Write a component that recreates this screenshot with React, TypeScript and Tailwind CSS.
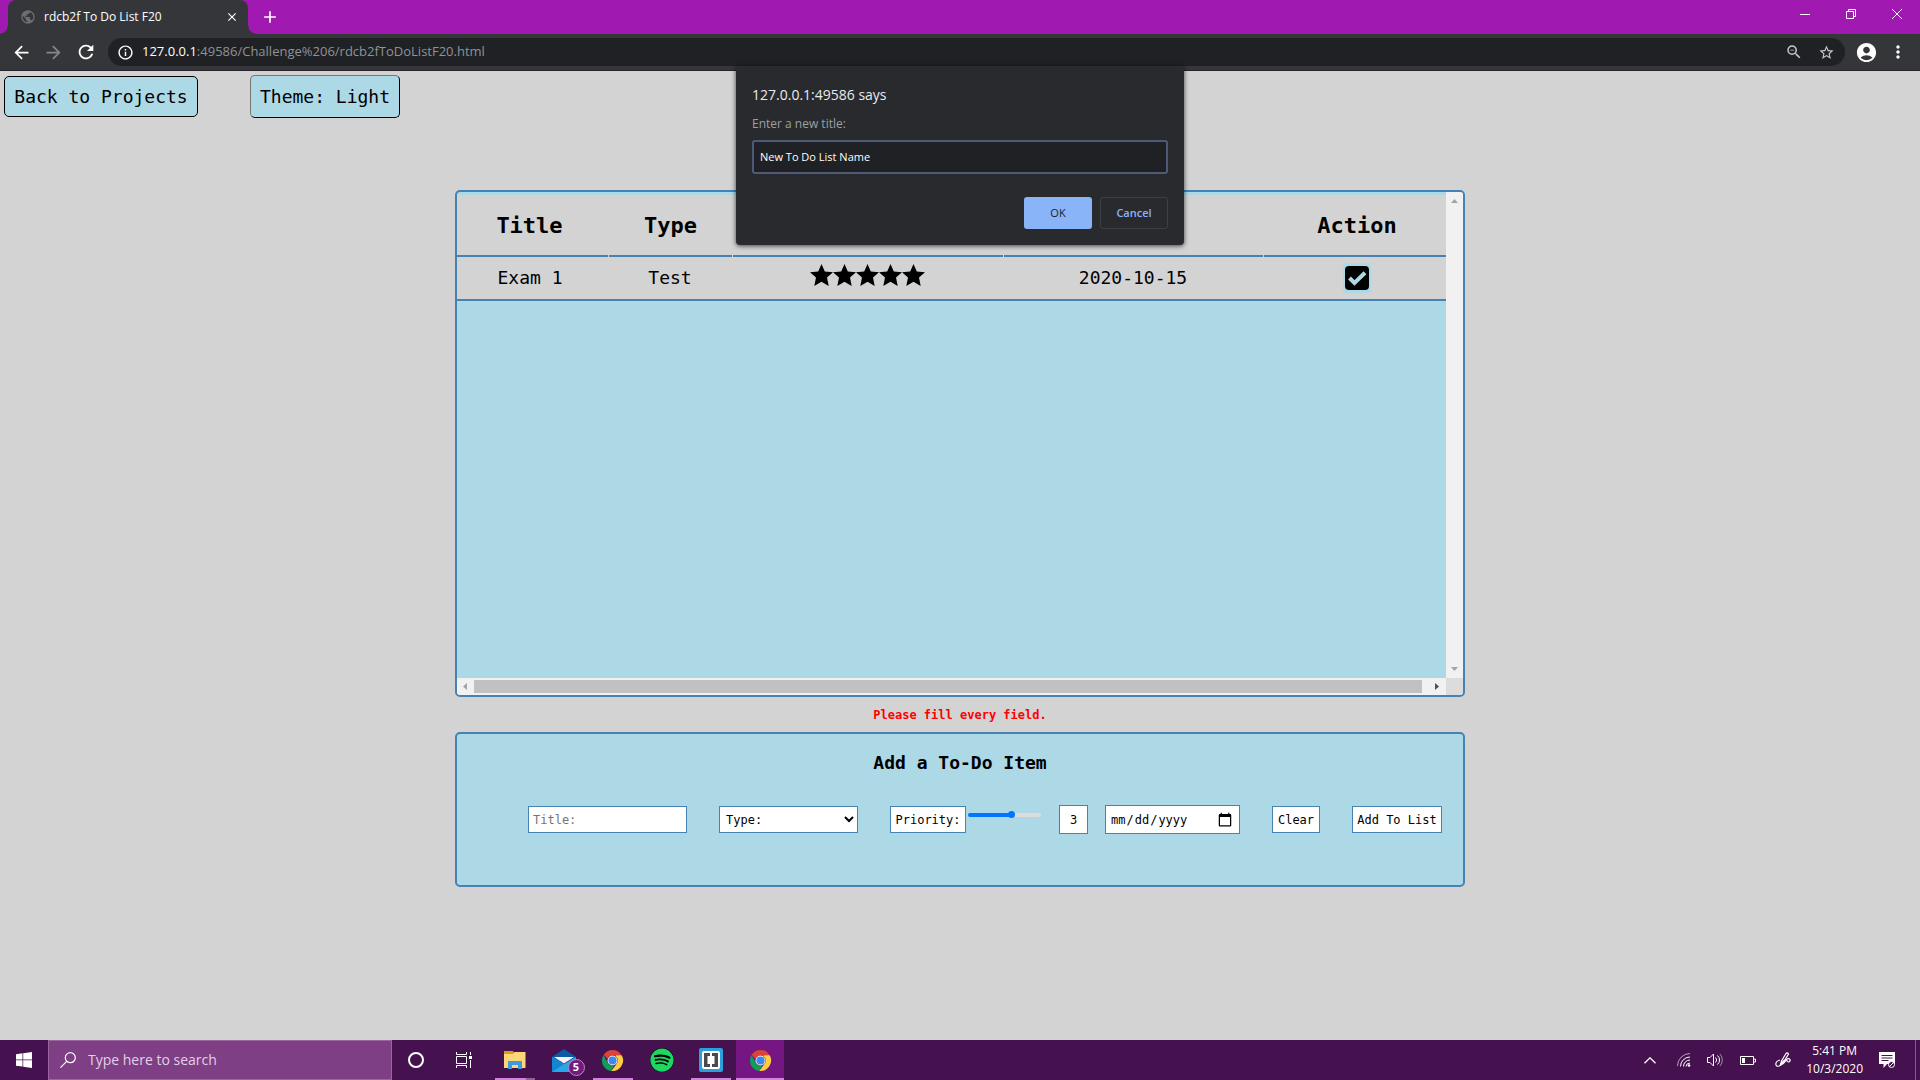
import React, { useState } from "react";
import {
  MdAccountCircle,
  MdAdd,
  MdArrowBack,
  MdArrowForward,
  MdClose,
  MdInfoOutline,
  MdMoreVert,
  MdPublic,
  MdRefresh,
  MdStarBorder,
  MdZoomOut,
} from "react-icons/md";
import { FaSpotify } from "react-icons/fa";

function TabStrip() {
  return (
    <header className="flex h-[34px] items-stretch bg-[#a01ab2]">
      <div className="flex w-2 items-end">
        <span className="h-2 w-2 bg-[radial-gradient(circle_at_0_0,transparent_7px,#35363a_8px)]" />
      </div>
      <div className="flex w-60 items-center rounded-t-lg bg-[#35363a] pr-[9px] pl-3 text-white">
        <MdPublic className="mr-2 size-4 shrink-0 text-[#6b6e73]" />
        <span className="flex-1 truncate text-xs">rdcb2f To Do List F20</span>
        <button aria-label="Close tab" className="flex">
          <MdClose className="size-3.5" />
        </button>
      </div>
      <div className="flex w-2 items-end">
        <span className="h-2 w-2 bg-[radial-gradient(circle_at_100%_0,transparent_7px,#35363a_8px)]" />
      </div>
      <button aria-label="New tab" className="ml-1 flex items-center text-white">
        <MdAdd className="size-5" />
      </button>
      <div className="ml-auto flex text-white">
        <button aria-label="Minimize" className="flex h-7 w-[46px] items-center justify-center">
          <svg viewBox="0 0 10 10" className="size-2.5">
            <path d="M0 5.5h10" stroke="currentColor" />
          </svg>
        </button>
        <button aria-label="Restore" className="flex h-7 w-[46px] items-center justify-center">
          <svg viewBox="0 0 10 10" className="size-2.5" fill="none" stroke="currentColor">
            <path d="M.5 2.5h7v7h-7zM2.5 2.5v-2h7v7h-2" />
          </svg>
        </button>
        <button aria-label="Close" className="flex h-7 w-[46px] items-center justify-center">
          <svg viewBox="0 0 10 10" className="size-2.5" stroke="currentColor">
            <path d="M0 0l10 10M10 0L0 10" />
          </svg>
        </button>
      </div>
    </header>
  );
}

function Toolbar() {
  return (
    <div className="flex h-[37px] items-center border-b border-[#27222a] bg-[#35363a] pl-[11px] text-white">
      <button aria-label="Back" className="flex w-8">
        <MdArrowBack className="size-[21px]" />
      </button>
      <button aria-label="Forward" className="flex w-8 text-[#85868a]">
        <MdArrowForward className="size-[21px]" />
      </button>
      <button aria-label="Reload" className="flex w-[33px]">
        <MdRefresh className="size-[22px]" />
      </button>
      <div className="flex h-7 flex-1 items-center rounded-full bg-[#202124] pr-2.5 pl-[9px]">
        <MdInfoOutline className="mr-2 size-[17px]" />
        <span className="flex-1 text-[13px] text-[#8f9296]">
          <span className="text-white">127.0.0.1</span>:49586/Challenge%206/rdcb2fToDoListF20.html
        </span>
        <button aria-label="Zoom out" className="mr-[15px] flex text-[#c4c7cb]">
          <MdZoomOut className="size-[18px]" />
        </button>
        <button aria-label="Bookmark" className="flex text-[#c4c7cb]">
          <MdStarBorder className="size-[17px]" />
        </button>
      </div>
      <button aria-label="Profile" className="ml-2.5 flex">
        <MdAccountCircle className="size-[23px]" />
      </button>
      <button aria-label="Menu" className="mr-3 ml-2.5 flex">
        <MdMoreVert className="size-5" />
      </button>
    </div>
  );
}

function PromptDialog() {
  const [value, setValue] = useState("New To Do List Name");
  return (
    <div
      role="dialog"
      aria-labelledby="prompt-heading"
      className="absolute top-[66px] left-1/2 z-10 w-md -translate-x-1/2 rounded-b-sm bg-[#292a2d] px-4 pt-[17px] pb-4 shadow-[0_1px_5px_rgba(0,0,0,0.7)]"
    >
      <h1 id="prompt-heading" className="text-sm/6 text-[#e8eaed]">
        127.0.0.1:49586 says
      </h1>
      <label htmlFor="prompt-value" className="mt-[7px] block text-xs/5 text-[#9aa0a6]">
        Enter a new title:
      </label>
      <input
        id="prompt-value"
        value={value}
        onChange={(e) => setValue(e.target.value)}
        className="mt-1.5 block h-[34px] w-full rounded-[3px] border-2 border-[#4d5b79] bg-[#202124] px-1.5 pb-0.5 text-[11px] text-white outline-none"
      />
      <div className="mt-[23px] flex justify-end gap-2 text-[11px]">
        <button className="h-8 w-[68px] rounded-[3px] bg-[#8ab4f8] text-[#202124]">OK</button>
        <button className="h-8 w-[68px] rounded-[3px] border border-[#3c4043] font-semibold text-[#8ab4f8]">
          Cancel
        </button>
      </div>
    </div>
  );
}

function ScrollArrow({ className, d }: { className: string; d: string }) {
  return (
    <svg viewBox="0 0 17 17" className={"size-[17px] shrink-0 " + className} fill="currentColor">
      <path d={d} />
    </svg>
  );
}

const columns = [
  { id: "title", label: "Title", width: "w-[152px]", pad: "pr-1.5" },
  { id: "type", label: "Type", width: "w-[124px]", pad: "" },
  { id: "priority", label: "", width: "w-[271px]", pad: "" },
  { id: "due", label: "", width: "w-[260px]", pad: "" },
  { id: "action", label: "Action", width: "", pad: "pl-1" },
];

function TodoTable() {
  return (
    <section className="grid h-[507px] grid-cols-[1fr_17px] grid-rows-[1fr_17px] overflow-hidden rounded-[5px] border-2 border-[#4682b4] bg-[#add8e6]">
      <div className="pt-[3px]">
        <table className="w-full table-fixed border-collapse bg-[#d3d3d3] text-center text-lg">
          <thead>
            <tr>
              {columns.map((c, i) => (
                <th key={c.id} scope="col" className={"p-0 text-[22px] " + c.width}>
                  <div
                    className={
                      "flex h-[62px] items-center justify-center border-b-2 border-[#4682b4] pt-0.5 " +
                      c.pad +
                      (i < columns.length - 1 ? " mr-px" : "")
                    }
                  >
                    {c.label}
                  </div>
                </th>
              ))}
            </tr>
          </thead>
          <tbody>
            <tr className="h-[43px] border-b-2 border-[#4682b4]">
              <td className="p-0 pr-1.5">Exam 1</td>
              <td className="p-0 pr-0.5">Test</td>
              <td className="p-0 pr-0.5">
                <span className="flex justify-center pb-1.5" aria-label="5 stars">
                  {[1, 2, 3, 4, 5].map((n) => (
                    <svg key={n} viewBox="0 0 23 22" className="h-[22px] w-[23px]">
                      <path d="M11.500 0L14.800 7.400L23 8.200L17 13.600L18.700 22L11.500 17.800L4.300 22L6 13.600L0 8.200L8.200 7.400z" />
                    </svg>
                  ))}
                </span>
              </td>
              <td className="p-0 pr-0.5">2020-10-15</td>
              <td className="p-0 pl-1">
                <button
                  aria-label="Mark done"
                  className="inline-flex h-[30px] w-7 items-center justify-center rounded-sm bg-[#add8e6] align-middle"
                >
                  <svg viewBox="0 0 24 24" className="size-6">
                    <rect width="24" height="24" rx="4" />
                    <path d="M4.500 12l5 5L20 6.800" fill="none" stroke="#add8e6" strokeWidth="4" />
                  </svg>
                </button>
              </td>
            </tr>
          </tbody>
        </table>
      </div>
      <div className="flex flex-col justify-between bg-[#f1f1f1] text-[#a3a3a3]">
        <ScrollArrow className="" d="M5 11h7L8.500 7z" />
        <ScrollArrow className="" d="M5 6h7L8.500 10z" />
      </div>
      <div className="flex items-center bg-[#f1f1f1] text-[#a3a3a3]">
        <ScrollArrow className="" d="M10 5v7L6 8.500z" />
        <div className="mr-[7px] h-[13px] flex-1 bg-[#c1c1c1]" />
        <ScrollArrow className="text-[#505050]" d="M6 5v7L10 8.500z" />
      </div>
      <div className="bg-[#dcdcdc]" />
    </section>
  );
}

const fieldBox = "border border-[#4682b4] bg-white text-xs";

function AddItemForm() {
  return (
    <form
      onSubmit={(e) => e.preventDefault()}
      className="h-[155px] rounded-[5px] border-2 border-[#4682b4] bg-[#add8e6] pt-[15px]"
    >
      <h2 className="text-center text-lg/7 font-bold">Add a To-Do Item</h2>
      <div className="mt-7 flex items-center justify-end pr-[21px]">
        <input
          aria-label="Title"
          placeholder="Title:"
          className={"mr-8 h-[27px] w-[159px] px-1 placeholder:text-[#757575] " + fieldBox}
        />
        <select aria-label="Type" className={"mr-8 h-[27px] w-[139px] px-0.5 " + fieldBox}>
          <option>Type:</option>
          <option>Test</option>
        </select>
        <label
          htmlFor="priority"
          className={"mr-0.5 flex h-[27px] w-[76px] items-center justify-center " + fieldBox}
        >
          Priority:
        </label>
        <input
          id="priority"
          type="range"
          min={0}
          max={5}
          defaultValue={3}
          className="mr-[18px] mb-2.5 h-1 w-[73px] appearance-none rounded-full bg-[linear-gradient(90deg,#0075ff_58%,#dcdcdc_58%)] [&::-webkit-slider-thumb]:size-[7px] [&::-webkit-slider-thumb]:appearance-none [&::-webkit-slider-thumb]:rounded-full [&::-webkit-slider-thumb]:bg-[#0075ff]"
        />
        <output
          htmlFor="priority"
          className={"mr-[17px] flex h-[29px] w-[29px] items-center justify-center " + fieldBox}
        >
          3
        </output>
        <input
          aria-label="Due date"
          type="date"
          className={
            "mr-8 h-[29px] w-[135px] pr-1.5 pl-1 [&::-webkit-calendar-picker-indicator]:size-4 [&::-webkit-calendar-picker-indicator]:p-0 " +
            fieldBox
          }
        />
        <button type="button" className={"mr-8 h-[27px] w-12 " + fieldBox}>
          Clear
        </button>
        <button className={"h-[27px] w-[90px] " + fieldBox}>Add To List</button>
      </div>
    </form>
  );
}

function ChromeLogo() {
  return (
    <svg viewBox="0 0 48 48" className="size-[23px]">
      <path fill="#db4437" d="M24 2a22 22 0 0 1 19 11H24a11 11 0 0 0-10.500 7.700L5.600 11.900A22 22 0 0 1 24 2z" />
      <path fill="#0f9d58" d="M5.200 12.500L14.500 29.500A11 11 0 0 0 27.500 34.400L21.500 45.900A22 22 0 0 1 5.200 12.500z" />
      <path fill="#ffcd40" d="M43.200 13.200A22 22 0 0 1 21.500 45.900L33.500 29.500A11 11 0 0 0 31 15.500L30 13.200z" />
      <circle cx="24" cy="24" r="10.500" fill="#f1f1f1" />
      <circle cx="24" cy="24" r="8.500" fill="#4285f4" />
    </svg>
  );
}

function ExplorerIcon() {
  return (
    <svg viewBox="0 0 22 18" className="h-[18px] w-[22px]">
      <path fill="#e09b16" d="M0 0h9l1 1.500v3H0z" />
      <path fill="#fbd775" d="M0 3h9l1.500-2H21.500v16H0z" />
      <path fill="#3f9bdc" d="M4 18v-8h14v8h-4v-4H8v4z" />
    </svg>
  );
}

function MailIcon() {
  return (
    <span className="relative flex">
      <svg viewBox="0 0 24 23" className="h-[23px] w-6">
        <path fill="#0c59a4" d="M0 8L12 0l12 8v4H0z" />
        <path fill="#2aa5e8" d="M0 8l12 7 12-7v15H0z" />
        <path fill="#1286d3" d="M0 8l12 7L0 23z" />
        <path fill="#f3f3f3" d="M2 8h20l-10 6.500z" />
      </svg>
      <span className="absolute -right-[9px] -bottom-1 flex size-[17px] items-center justify-center rounded-full border border-[#b98ac4] bg-[#721a80] text-[11px] font-bold text-white">
        5
      </span>
    </span>
  );
}

function BracketsIcon() {
  return (
    <svg viewBox="0 0 24 24" className="size-6">
      <rect width="24" height="24" rx="2" fill="#2d9fdc" />
      <rect x="3" y="3" width="18" height="18" rx="2" fill="#fff" />
      <path fill="#4a4a4a" d="M5 5h6v3H8.500v8H11v3H5zM19 5h-6v3h2.500v8H13v3h6z" />
    </svg>
  );
}

const apps = [
  { name: "File Explorer", icon: <ExplorerIcon />, bar: "w-[31px] mr-[9px] shadow-[9px_0_0_#8f6298]", active: false },
  { name: "Mail", icon: <MailIcon />, bar: "", active: false },
  { name: "Google Chrome", icon: <ChromeLogo />, bar: "w-10", active: false },
  {
    name: "Spotify",
    icon: (
      <span className="rounded-full bg-black">
        <FaSpotify className="size-6 text-[#1ed760]" />
      </span>
    ),
    bar: "",
    active: false,
  },
  { name: "Brackets", icon: <BracketsIcon />, bar: "w-10", active: false },
  { name: "Google Chrome window", icon: <ChromeLogo />, bar: "w-12", active: true },
];

function Taskbar() {
  return (
    <footer className="flex h-10 items-stretch bg-[#46114f] text-white">
      <button aria-label="Start" className="flex w-12 items-center justify-center">
        <svg viewBox="0 0 16 16" className="size-4" fill="currentColor">
          <path d="M0 2.200L6.500 1.300v6.200H0zM7.200 1.200L16 0v7.500H7.200zM0 8.200h6.500v6.300L0 13.700zM7.200 8.200H16V16l-8.800-1.300z" />
        </svg>
      </button>
      <label className="flex w-[344px] items-center border border-[#98659c] bg-[#7e3f85] pl-[11px]">
        <svg viewBox="0 0 16 16" className="mr-3 size-4 shrink-0" fill="none" stroke="currentColor" strokeWidth="1.200">
          <circle cx="10.300" cy="5.700" r="5" />
          <path d="M6.700 9.300L.4 15.600" />
        </svg>
        <input
          aria-label="Search"
          placeholder="Type here to search"
          className="w-full bg-transparent text-sm outline-none placeholder:text-[#e3d0e5]"
        />
      </label>
      <button aria-label="Cortana" className="flex w-12 items-center justify-center">
        <span className="size-4 rounded-full border-2 border-white" />
      </button>
      <button aria-label="Task view" className="mr-0.5 flex w-12 items-center justify-center">
        <svg viewBox="0 0 16 16" className="size-4" fill="none" stroke="currentColor">
          <path d="M.5 0v2.500h10V0M.5 16v-2.500h10V16M.5 4.500h10v7H.5zM14.500 0v3M14.500 8v8" />
          <path d="M13 4h3v3h-3z" fill="currentColor" stroke="none" />
        </svg>
      </button>
      {apps.map((a) => (
        <button
          key={a.name}
          aria-label={a.name}
          className={"flex flex-col items-center " + (a.active ? "ml-px w-12 bg-[#751682]" : "w-[49px]")}
        >
          <span className="flex flex-1 items-center justify-center">{a.icon}</span>
          <span className={"-mt-0.5 h-0.5 bg-[#cf85dc] " + a.bar} />
        </button>
      ))}
      <div className="ml-auto flex items-center">
        <svg viewBox="0 0 12 7" className="mr-[21px] h-[7px] w-3" fill="none" stroke="currentColor" strokeWidth="1.300">
          <path d="M.5 6.300L6 .8l5.500 5.500" />
        </svg>
        <svg viewBox="0 0 14 14" className="mr-4 size-3.5" fill="none" stroke="currentColor">
          <path d="M.5 13A12.500 12.500 0 0 1 13 .5" opacity=".6" />
          <path d="M3.500 13.500A9.500 9.500 0 0 1 13 4M6.500 13.500A6.500 6.500 0 0 1 13 7M9 13.500a4 4 0 0 1 4-3.500" />
          <circle cx="12" cy="12.500" r="1.300" fill="currentColor" stroke="none" />
        </svg>
        <svg viewBox="0 0 17 14" className="mr-4 h-3.5 w-[17px]" fill="none" stroke="currentColor">
          <path d="M.5 4.500h2.500l3.500-3.500v12L3 9.500H.5zM8.500 4.500a3.500 3.500 0 0 1 0 5M10.500 2.500a6 6 0 0 1 0 9" />
          <path d="M13 1a9 9 0 0 1 0 12" opacity=".5" />
        </svg>
        <svg viewBox="0 0 16 9" className="mr-[19px] h-[9px] w-4" fill="none" stroke="currentColor">
          <path d="M.5.5h13v8H.5zM14 3h1.500v3H14" />
          <path d="M2 2h3v5H2z" fill="currentColor" stroke="none" />
        </svg>
        <svg viewBox="0 0 16 16" className="mr-[15px] size-4" fill="none" stroke="currentColor" strokeWidth="1.200">
          <path d="M5.500 12.500L6.500 9 11 1.500q1.500-1.500 2.500.5L9 9.500zM5.500 12.500l4-4.500" />
          <path d="M5 8Q1 9 .8 12q.2 3 3.200 2 5-2 7-6 2.500-2.500 4-.5.500 2-1.500 2.500-2-.5-1.500-2" />
        </svg>
        <time className="mr-4 text-center text-xs/[18px]">
          <span className="block">5:41 PM</span>
          <span className="block">10/3/2020</span>
        </time>
        <svg viewBox="0 0 16 16" className="mr-5 size-4">
          <path fill="#fff" d="M0 0h16v12H8l-3.500 4v-4H0z" />
          <path stroke="#46114f" d="M2.500 3.500h11M2.500 6h11M2.500 8.500h7" />
          <circle cx="12.500" cy="12.500" r="3" fill="#46114f" stroke="#fff" />
          <path stroke="#fff" d="M10.500 14.500l4-4" />
        </svg>
        <span className="mr-1 h-10 w-px bg-[#85578b]" />
      </div>
    </footer>
  );
}

export default function App() {
  return (
    <div className="relative flex min-h-screen flex-col bg-[#d3d3d3] font-['Open_Sans','Noto_Sans',sans-serif] text-black">
      <TabStrip />
      <Toolbar />
      <PromptDialog />
      <main className="flex-1 font-['DejaVu_Sans_Mono',monospace]">
        <nav className="flex items-center pt-1 pl-1 text-lg">
          <a
            href="#projects"
            className="mr-[52px] flex h-[41px] w-[194px] items-center justify-center rounded-[5px] border border-black bg-[#add8e6]"
          >
            Back to Projects
          </a>
          <button className="h-[43px] w-[150px] rounded-[5px] border border-t-[#767676] border-r-black border-b-black border-l-[#767676] bg-[#add8e6]">
            Theme: Light
          </button>
        </nav>
        <div className="mx-auto mt-[72px] w-[1010px] max-w-full">
          <TodoTable />
          <p role="alert" className="pt-[9px] pb-[7px] text-center text-xs/[19px] font-bold text-[#ff0000]">
            Please fill every field.
          </p>
          <AddItemForm />
        </div>
      </main>
      <Taskbar />
    </div>
  );
}
